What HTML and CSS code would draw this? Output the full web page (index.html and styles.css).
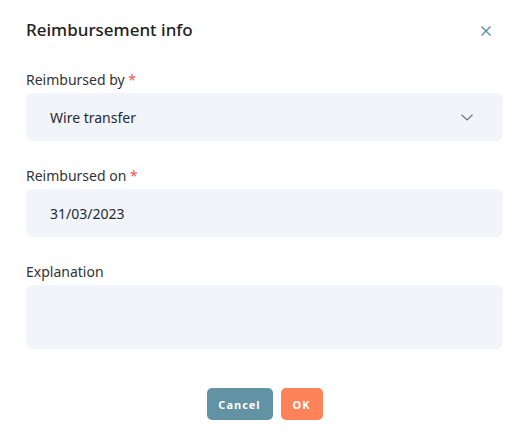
FILE: index.html
```html
<!DOCTYPE html>
<html>
<head>
<meta charset="utf-8">
<link rel="stylesheet" href="styles.css">
</head>
<body>
<div class="dialog">
  <div class="header">
    <h1 class="title">Reimbursement info</h1>
    <button class="close" aria-label="Close">
      <svg width="10" height="10" viewBox="0 0 10 10"><path d="M0.5 0.5L9.5 9.5M9.5 0.5L0.5 9.5" stroke="#4a8aa3" stroke-width="1.2" fill="none"/></svg>
    </button>
  </div>
  <div class="field">
    <label class="label">Reimbursed by <span class="req">*</span></label>
    <div class="input select">
      <span>Wire transfer</span>
      <svg class="chev" width="12" height="7" viewBox="0 0 12 7"><path d="M0.5 0.8L6 6L11.5 0.8" stroke="#6b7280" stroke-width="1.2" fill="none"/></svg>
    </div>
  </div>
  <div class="field">
    <label class="label">Reimbursed on <span class="req">*</span></label>
    <div class="input"><span>31/03/2023</span></div>
  </div>
  <div class="field">
    <label class="label">Explanation</label>
    <div class="input textarea"></div>
  </div>
  <div class="actions">
    <button class="btn cancel">Cancel</button>
    <button class="btn ok">OK</button>
  </div>
</div>
</body>
</html>
```
FILE: styles.css
```css
html, body {
  margin: 0;
  padding: 0;
  background: #ffffff;
}
body {
  font-family: "Noto Sans", "Open Sans", sans-serif;
  color: #1f2a37;
}
.dialog {
  width: 522px;
  height: 434px;
  box-sizing: border-box;
  padding: 20px 19px 0 26px;
  display: flex;
  flex-direction: column;
}
.header {
  display: flex;
  align-items: center;
  justify-content: space-between;
  height: 20px;
  margin-bottom: 30px;
}
.title {
  margin: 0;
  font-size: 17px;
  line-height: 20px;
  font-weight: 500;
  color: #222;
}
.close {
  border: 0;
  background: none;
  padding: 0;
  width: 12px;
  height: 12px;
  display: flex;
  align-items: center;
  justify-content: center;
  margin-right: 11px;
  margin-top: 1px;
}
.field {
  display: flex;
  flex-direction: column;
  width: 477px;
  margin-bottom: 25px;
}
.label {
  font-size: 14px;
  line-height: 20px;
  color: #333;
  margin-bottom: 3px;
}
.req {
  color: #f2545b;
}
.input {
  height: 48px;
  box-sizing: border-box;
  background: #f1f4f8;
  border-radius: 7px;
  display: flex;
  align-items: center;
  padding: 0 30px 0 24px;
  font-size: 14px;
  color: #1f2937;
}
.select {
  justify-content: space-between;
}
.chev {
  margin-top: 1px;
}
.textarea {
  height: 64px;
}
.actions {
  display: flex;
  justify-content: center;
  gap: 8px;
  margin-top: 14px;
  width: 477px;
}
.btn {
  border: 0;
  height: 32px;
  border-radius: 5px;
  color: #fff;
  font-family: "Noto Sans", sans-serif;
  font-weight: 700;
  font-size: 11px;
  letter-spacing: 1px;
  padding: 0;
}
.cancel {
  width: 66px;
  background: #6193a4;
}
.ok {
  width: 42px;
  background: #ff8259;
}
```
